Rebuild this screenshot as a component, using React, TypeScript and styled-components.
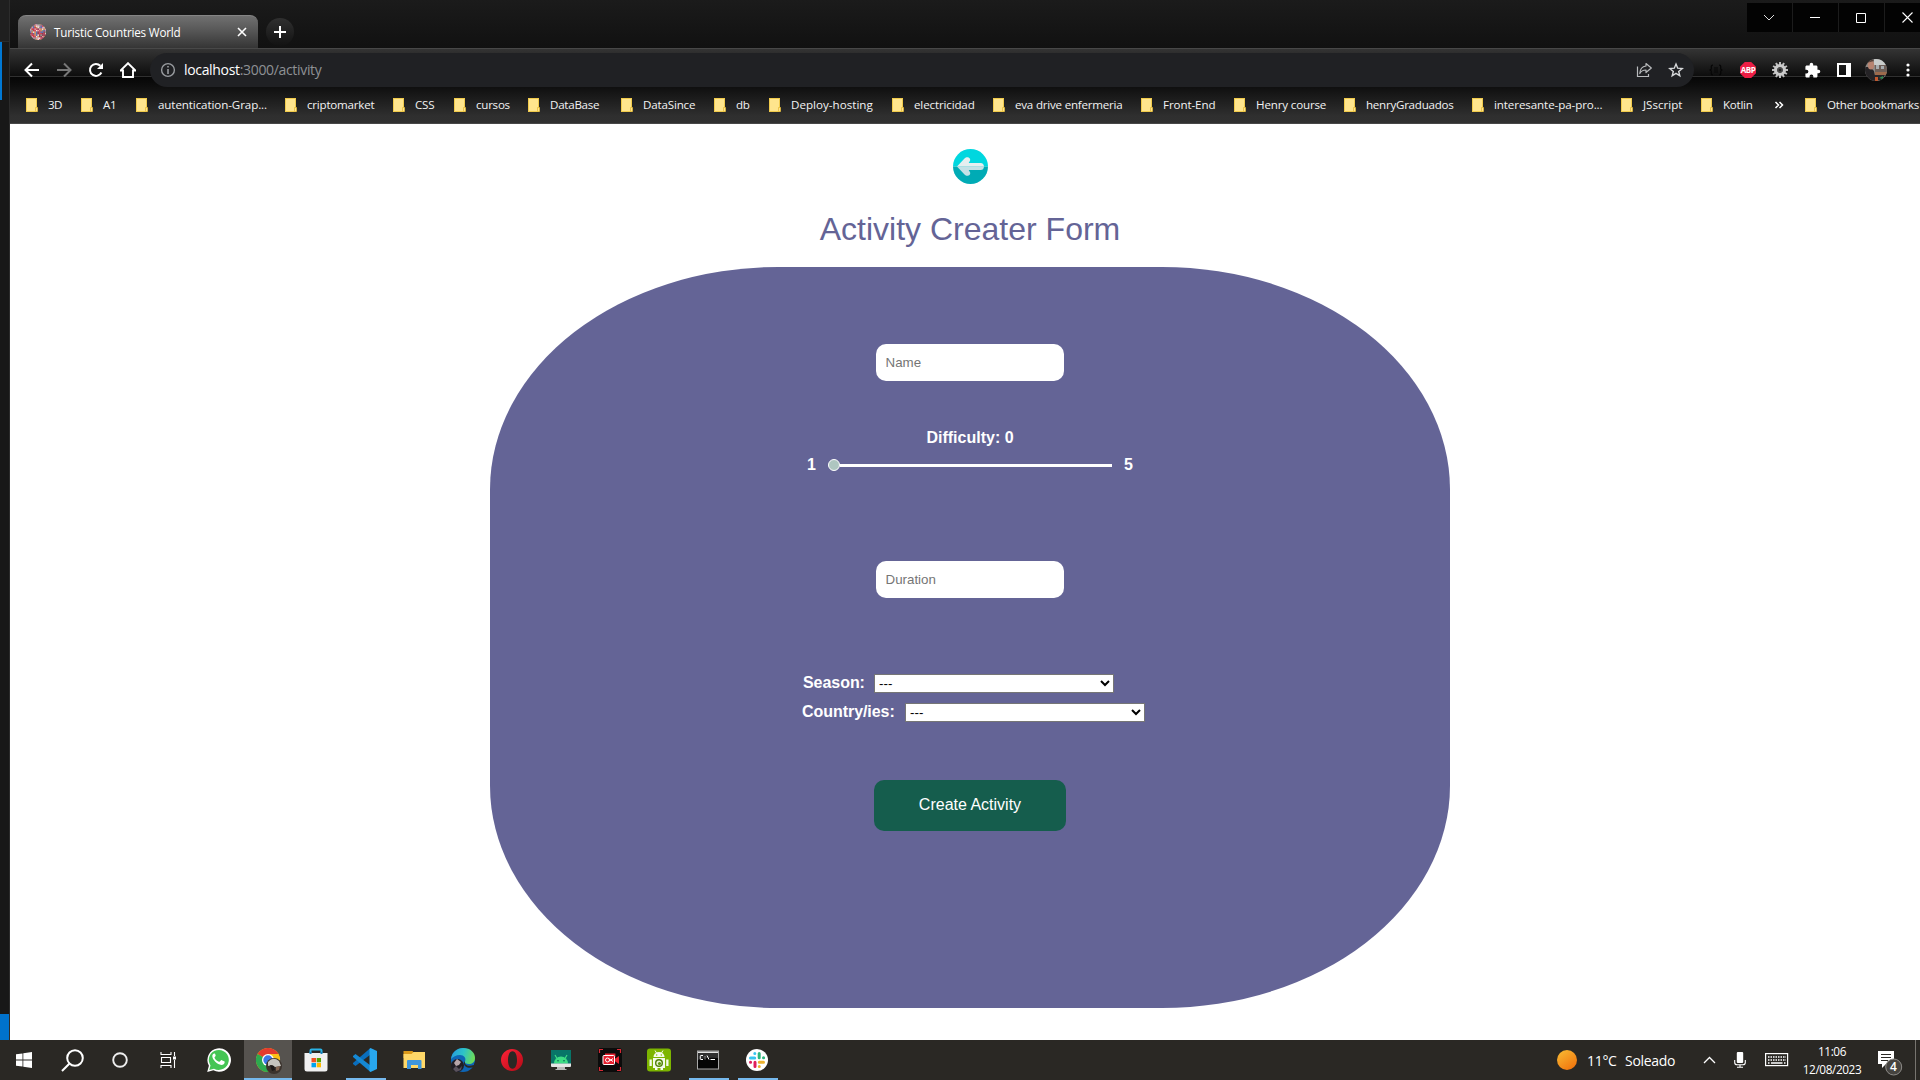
import React from "react";
import styled, { createGlobalStyle } from "styled-components";

const GlobalStyle = createGlobalStyle`
  * { box-sizing: border-box; }
  html, body { margin: 0; padding: 0; overflow: hidden; background: #fff; }
  button, input, select { font-family: "Liberation Sans", Arial, sans-serif; }
`;

const UI_FONT = `"Open Sans", "Noto Sans", sans-serif`;

const Desktop = styled.div`
  display: flex;
  flex-direction: column;
  width: 1920px;
  height: 1080px;
  overflow: hidden;
  font-family: ${UI_FONT};
`;
const Screen = styled.div`
  display: flex;
  height: 1040px;
`;
const EditorEdge = styled.div`
  display: flex;
  flex-direction: column;
  width: 10px;
  flex: none;
  background: #181818;
  border-right: 1px solid #2c2c2c;
`;
const EdgeTop = styled.div`
  height: 42px;
  background: #1f1f1f;
  border-bottom: 1px solid #2b2b2b;
`;
const EdgeMarker = styled.div`
  width: 2px;
  height: 58px;
  background: #0078d4;
`;
const EdgeStatus = styled.div`
  height: 26px;
  margin-top: auto;
  background: #0072cc;
`;
const Browser = styled.div`
  display: flex;
  flex-direction: column;
  flex: 1;
  min-width: 0;
  overflow: hidden;
`;

/* ---------- title bar ---------- */
const TitleBar = styled.div`
  display: flex;
  flex: none;
  height: 48px;
  padding-left: 8px;
  background: linear-gradient(#1b1b1b, #111);
`;
const Tab = styled.div`
  display: flex;
  align-items: center;
  width: 240px;
  height: 33px;
  margin-top: 15px;
  padding: 0 9px 0 12px;
  border-radius: 8px 8px 0 0;
  border-top: 1px solid #858585;
  background: linear-gradient(#707070, #5a5a5a 40%, #353535);
`;
const TabTitle = styled.span`
  flex: 1;
  margin: -1px 0 0 8px;
  font-size: 11.7px;
  letter-spacing: -0.19px;
  color: #fff;
  white-space: nowrap;
`;
const NewTab = styled.div`
  display: grid;
  place-items: center;
  width: 28px;
  height: 28px;
  margin: 18px 0 0 8px;
  border-radius: 50%;
  background: linear-gradient(#303030, #121212);
`;
const WindowControls = styled.div`
  display: flex;
  gap: 1px;
  height: 29px;
  margin: 3px -10px 0 auto;
  background: #1c1c1c;
`;
const ControlButton = styled.div`
  display: grid;
  place-items: center;
  width: 45px;
  padding-right: 1px;
  background: #030303;
`;

/* ---------- toolbar ---------- */
const Chrome = styled.div`
  display: flex;
  flex-direction: column;
  flex: none;
  height: 76px;
  border-bottom: 1px solid #474747;
  background: linear-gradient(#484848 0 1px, #343434 1px, #0d0d0d 28px, #303030 28px 29px, #060606 29px, #0d0d0d 37px, #2f2f2f 68px, #303030);
`;
const Toolbar = styled.div`
  display: flex;
  align-items: center;
  height: 39px;
  padding: 5px 0 0 6px;
`;
const ToolCell = styled.div`
  display: grid;
  place-items: center;
  width: 32px;
  height: 34px;
  flex: none;
`;
const Omnibox = styled.div`
  display: flex;
  align-items: center;
  width: 1544px;
  height: 34px;
  margin: 0 6px;
  padding: 0 2px 0 10px;
  flex: none;
  border-radius: 17px;
  background: #202124;
`;
const Url = styled.span`
  flex: 1;
  margin-left: 8px;
  font-size: 14px;
  letter-spacing: -0.33px;
  line-height: 20px;
  color: #8e9195;
`;
const Host = styled.span`
  color: #fff;
`;
const BookmarkBar = styled.div`
  display: flex;
  align-items: center;
  height: 36px;
  padding-left: 16px;
`;
const Bookmark = styled.div<{ $w: number }>`
  display: flex;
  align-items: center;
  width: ${(p) => p.$w}px;
  flex: none;
`;
const BookmarkLabel = styled.span<{ $tracking?: number }>`
  margin-left: 10px;
  font-size: 11.6px;
  letter-spacing: ${(p) => p.$tracking ?? -0.26}px;
  line-height: 16px;
  color: #f2f2f2;
  white-space: nowrap;
`;
const Overflow = styled.div`
  width: 20px;
  flex: none;
  line-height: 0;
`;
const BarDivider = styled.div`
  width: 1px;
  height: 16px;
  margin-right: 11px;
  background: #666;
`;

/* ---------- page ---------- */
const Page = styled.main`
  display: flex;
  flex-direction: column;
  align-items: center;
  flex: 1;
  padding: 25px 0 0 10px;
  background: #fff;
  font-family: "Liberation Sans", Arial, sans-serif;
`;
const BackLink = styled.div`
  width: 35px;
  height: 35px;
`;
const Heading = styled.h1`
  margin: 27px 0 19px;
  font-size: 32px;
  font-weight: 400;
  line-height: 37px;
  color: #646496;
`;
const Form = styled.form`
  display: flex;
  flex-direction: column;
  align-items: center;
  width: 960px;
  height: 741px;
  padding-top: 77px;
  border-radius: 30%;
  background: #646496;
  color: #fff;
`;
const TextInput = styled.input`
  width: 188px;
  height: 37px;
  padding: 0 10px 0 9.5px;
  border: 0;
  border-radius: 10px;
  background: #fff;
  font-size: 13.333px;
  &::placeholder { color: #757575; opacity: 1; }
`;
const Difficulty = styled.div`
  display: flex;
  flex-direction: column;
  align-items: center;
  height: 180px;
  padding-top: 48px;
  font-weight: 700;
  font-size: 16px;
  line-height: 18px;
`;
const SliderRow = styled.div`
  display: flex;
  align-items: center;
  gap: 12px;
  margin-top: 9px;
`;
const Slider = styled.div`
  display: flex;
  align-items: center;
  width: 284px;
  height: 12px;
`;
const Thumb = styled.div`
  width: 12px;
  height: 12px;
  border: 1px solid #fff;
  border-radius: 50%;
  background: #aec6c0;
`;
const Track = styled.div`
  flex: 1;
  height: 3px;
  margin-top: 1px;
  background: #fff;
`;
const Choices = styled.div`
  display: flex;
  flex-direction: column;
  gap: 10px;
  width: 344px;
  margin: 76px 0 58px 8px;
`;
const ChoiceRow = styled.label<{ $indent: number }>`
  display: flex;
  align-items: flex-start;
  height: 19px;
  padding-left: ${(p) => p.$indent}px;
  font-size: 16px;
  font-weight: 700;
  line-height: 18px;
  letter-spacing: -0.05px;
  white-space: nowrap;
`;
const LabelText = styled.span<{ $w: number }>`
  width: ${(p) => p.$w}px;
`;
const SelectSlot = styled.span`
  display: flex;
  flex: none;
`;
const Select = styled.select`
  width: 240px;
  height: 19px;
  padding: 0;
  border: 1px solid #767676;
  border-radius: 0;
  background-color: #fff;
  color: #000;
  font-size: 13.333px;
`;
const Submit = styled.button`
  width: 192px;
  height: 51px;
  padding: 0 0 1px;
  border: 0;
  border-radius: 10px;
  background: #155d4d;
  color: #fff;
  font-size: 16px;
`;

/* ---------- taskbar ---------- */
const Taskbar = styled.div`
  display: flex;
  height: 40px;
  background: #2a2824;
  color: #fff;
`;
const SystemCell = styled.div`
  display: grid;
  place-items: center;
  width: 48px;
`;
const Apps = styled.div`
  display: flex;
  margin-left: 3px;
`;
const AppCell = styled.div<{ $active?: boolean }>`
  display: flex;
  flex-direction: column;
  align-items: center;
  width: ${(p) => (p.$active ? 48 : 49)}px;
  padding-top: 8px;
  background: ${(p) => (p.$active ? "#56534f" : "transparent")};
`;
const RunBar = styled.div<{ $wide?: boolean }>`
  width: ${(p) => (p.$wide ? 48 : 40)}px;
  height: 2px;
  margin-top: 6px;
  background: #76b9ed;
`;
const IconBox = styled.div<{ $shift?: boolean }>`
  display: grid;
  place-items: center;
  width: 26px;
  height: 24px;
  margin-left: ${(p) => (p.$shift ? 2 : -1)}px;
`;
const Tray = styled.div`
  display: flex;
  align-items: center;
  margin-left: auto;
`;
const Weather = styled.div`
  display: flex;
  align-items: center;
  width: 145px;
  font-size: 14px;
  letter-spacing: -0.3px;
`;
const Sun = styled.div`
  width: 20px;
  height: 20px;
  margin-right: 10px;
  border-radius: 50%;
  background: linear-gradient(145deg, #f8bd35, #f06c08);
`;
const Temp = styled.span`
  width: 38px;
`;
const TrayIcon = styled.div<{ $w: number }>`
  display: grid;
  place-items: center;
  width: ${(p) => p.$w}px;
`;
const ClockSlot = styled.div`
  display: flex;
  justify-content: center;
  width: 86px;
  margin: -1px 3px 0 0;
`;
const Clock = styled.div`
  width: 70px;
  text-align: center;
  font-size: 11.8px;
  letter-spacing: -0.4px;
  line-height: 18px;
`;
const NoticeSlot = styled.div`
  position: relative;
  width: 37px;
  height: 26px;
  margin-top: 8px;
`;
const NoticeCount = styled.span`
  position: absolute;
  left: 12px;
  top: 7px;
  font-size: 12px;
  font-weight: 600;
  line-height: 17px;
`;
const Peek = styled.div`
  width: 5px;
  height: 40px;
  border-left: 1px solid #77746f;
`;

const Folder = () => (
  <svg width="12" height="14" viewBox="0 0 12 14">
    <rect x=".5" y=".5" width="10" height="13" fill="#ffe58d" stroke="#f1cb4c" />
    <path d="M9.500 9.500h2v4h-2z" fill="#ffe58d" stroke="#e9bd38" strokeWidth=".8" />
  </svg>
);

const bookmarks: [string, number, number?][] = [
  ["3D", 55, -0.6], ["A1", 55], ["autentication-Grap...", 149, -0.1], ["criptomarket", 108, -0.22], ["CSS", 61],
  ["cursos", 74], ["DataBase", 93], ["DataSince", 93, -0.18], ["db", 55], ["Deploy-hosting", 123, 0.02],
  ["electricidad", 101, -0.15], ["eva drive enfermeria", 148, -0.22], ["Front-End", 93, -0.1], ["Henry course", 110, -0.16],
  ["henryGraduados", 128], ["interesante-pa-pro...", 149, -0.1], ["JSscript", 80, 0], ["Kotlin", 73],
];

const confetti = ["#d9485f", "#f4e9e2", "#5470b5", "#d79a5a", "#c79ac5", "#e8a0ae", "#8c3c52", "#c83a4a", "#86a58c"];
const Favicon = () => (
  <svg width="16" height="16" viewBox="0 0 16 16">
    <clipPath id="globe"><circle cx="8" cy="8" r="8" /></clipPath>
    <g clipPath="url(#globe)">
      <rect width="16" height="16" fill="#b8707f" />
      {Array.from({ length: 121 }, (_, i) => {
        const noise = Math.abs(Math.sin(i * 127.1 + 3.7) * 43758.5453) % 1;
        return <rect key={i} x={(i % 11) * 1.5} y={Math.floor(i / 11) * 1.5} width="1.4" height="1.4" fill={confetti[Math.floor(noise * confetti.length)]} />;
      })}
    </g>
  </svg>
);

const Gear = () => (
  <svg width="16" height="16" viewBox="0 0 16 16">
    {Array.from({ length: 12 }, (_, i) => (
      <rect key={i} x="7" y="0" width="2" height="4" fill="#bdbdbd" transform={`rotate(${i * 30} 8 8)`} />
    ))}
    <circle cx="8" cy="8" r="4.400" fill="none" stroke="#cacaca" strokeWidth="3.400" />
    <circle cx="8" cy="8" r="2.700" fill="#4b4b4b" />
    <circle cx="8" cy="8" r="1.300" fill="#222" />
  </svg>
);

const Avatar = () => (
  <svg width="22" height="22" viewBox="0 0 22 22">
    <clipPath id="face"><circle cx="11" cy="11" r="11" /></clipPath>
    <g clipPath="url(#face)">
      <rect width="22" height="22" fill="#8b8884" />
      <path d="M9 0h13v6H9z" fill="#c9cccb" />
      <path d="M10 6h12v7H10z" fill="#6d5e57" />
      <path d="M11 6h3v4h-3zm5 1h3v3h-3z" fill="#a8adb0" />
      <path d="M10 13h12v3H10z" fill="#9c6a4c" />
      <path d="M0 22V8l5 0 4 4 2 10z" fill="#252326" />
      <ellipse cx="6" cy="6" rx="3.200" ry="4.600" fill="#b78370" />
      <path d="M2 4C3-1 8 0 9 2L5 3z" fill="#574139" />
      <path d="M8 16h12l-3 5H9z" fill="#282427" />
      <path d="M14 19l4-2v3z" fill="#2f8c55" />
      <path d="M10 18h3v4h-3z" fill="#c4572c" />
    </g>
  </svg>
);

const WhatsApp = () => (
  <svg width="24" height="24" viewBox="0 0 24 24">
    <path d="M.2 24l1.700-6.200A11.800 11.800 0 1 1 6.400 22.300z" fill="#fff" />
    <path d="M2.200 22l1.300-4.500A10 10 0 1 1 7 20.700z" fill="#45c554" />
    <path d="M8.200 6.100c-.3-.6-.6-.6-1-.6-.8 0-1.900.9-1.900 2.600 0 3.600 5 8.700 9.100 8.900 1.700 0 3.300-1 3.300-2.900 0-.4-.1-.6-.6-.8l-2.400-1.100c-.4-.2-.7-.1-.9.200l-1 1.200c-.3.3-.5.3-.9.100-2-.8-3.400-2.200-4.300-3.800-.2-.3 0-.6.200-.8l.8-1c.2-.3.1-.5 0-.8z" fill="#fff" />
  </svg>
);

const ChromeLogo = () => (
  <svg width="26" height="26" viewBox="0 0 26 26">
    <circle cx="12" cy="12" r="12" fill="#fbc116" />
    <path d="M12 12L1.600 6A12 12 0 0 1 22.400 6z" fill="#e33b2e" />
    <path d="M12 12L1.600 6A12 12 0 0 0 12 24l5.200-9z" fill="#2da94f" />
    <path d="M12 6h10.400A12 12 0 0 1 12 24l5.200-9z" fill="#fbc116" />
    <circle cx="12" cy="12" r="6" fill="#fff" />
    <circle cx="12" cy="12" r="4.700" fill="#3b78e7" />
    <circle cx="18" cy="18" r="8" fill="#3b332d" />
    <path d="M12 14q5-6 11-1l2 5-6 1-3-2-4 1z" fill="#c6c3bd" />
    <path d="M14 17l4 1 1 4-3 1z" fill="#1d1817" />
    <path d="M20 19l4-1-1 4-3 1z" fill="#846450" />
  </svg>
);

const Store = () => (
  <svg width="24" height="24" viewBox="0 0 24 24">
    <path d="M6.500 6V2.500Q6.500 1.500 7.500 1.500h9q1 0 1 1V6" fill="none" stroke="#2ab3e6" strokeWidth="2" />
    <path d="M.5 5h23v16q0 2.500-2.500 2.500H3Q.5 23.500.5 21z" fill="#f0f0f0" />
    <path d="M5.500 4h2v2h-2zm11 0h2v2h-2z" fill="#1682bd" />
    <path d="M7.500 10H12v4.300H7.500z" fill="#f25022" /><path d="M12.700 10H17v4.300h-4.300z" fill="#57a300" />
    <path d="M7.500 15H12v4.300H7.500z" fill="#00a4ef" /><path d="M12.700 15H17v4.300h-4.300z" fill="#ffb900" />
  </svg>
);

const VSCode = () => (
  <svg width="24" height="24" viewBox="0 0 24 24">
    <path d="M17.500 6.500L2.500 18 0 16v-1L17.500 0z" fill="#0a6ebd" />
    <path d="M17.500 17.500L2.500 6 0 8v1L17.500 24z" fill="#1588d3" />
    <path d="M17.500 0L24 3v18l-6.500 3-1-1V1z" fill="#28a8f0" />
  </svg>
);

const Explorer = () => (
  <svg width="24" height="24" viewBox="0 0 24 24">
    <path d="M1.500 3h9l1.500 2H22.500v5h-21z" fill="#dc9a1a" />
    <path d="M1.500 6h8l2-2h11.500v16h-21.500z" fill="#ffd868" />
    <path d="M5 21v-8q0-1 1-1h12.500q1 0 1 1v8H16v-4H9v4z" fill="#3f96dc" />
  </svg>
);

const Edge = () => (
  <svg width="24" height="24" viewBox="0 0 24 24">
    <defs>
      <linearGradient id="edgeTop" x1="0" x2="1" y1=".3" y2=".5"><stop stopColor="#269bdd" /><stop offset=".5" stopColor="#2dc3c8" /><stop offset="1" stopColor="#6fdc55" /></linearGradient>
    </defs>
    <circle cx="12" cy="12" r="12" fill="#0e65b5" />
    <path d="M0 11C1 4 6 0 12 0c8 0 12 5 12 10 0 4-3 6-6 6-3 0-4.500-1-4-2.500C15.500 10 13 7 9 7c-4 0-7 2-9 4z" fill="url(#edgeTop)" />
    <path d="M14 13.500C13 17 17 19 23 17l1-3v5l-1 0c-5 2-11 0-10-5z" fill="#2a2824" />
    <circle cx="6.500" cy="17.500" r="6.500" fill="#211d24" />
    <path d="M6 11l4 3-2 3-3 1-2-3z" fill="#b7a5a9" />
    <path d="M2 21l3-3 3 3 3-3-1 4-5 2z" fill="#59515c" />
  </svg>
);

const Opera = () => (
  <svg width="24" height="24" viewBox="0 0 24 24">
    <defs><linearGradient id="operaRed" x1="0" y1="0" x2="1" y2="1"><stop stopColor="#ff2338" /><stop offset="1" stopColor="#b20a16" /></linearGradient></defs>
    <path fillRule="evenodd" d="M12 1a11 11 0 1 1 0 22 11 11 0 0 1 0-22zM12.500 3.200C9.300 3.200 8 7.500 8 12s1.300 8.800 4.500 8.800S17 16.500 17 12s-1.300-8.800-4.500-8.800z" fill="url(#operaRed)" />
  </svg>
);

const Emulator = () => (
  <svg width="24" height="24" viewBox="0 0 24 24">
    <path d="M2 2h20v16H2z" fill="#087568" />
    <path d="M5 15.500a7 7 0 0 1 14 0z" fill="#3ddc84" />
    <path d="M6 7l2 3.500M18 7l-2 3.500" stroke="#3ddc84" strokeWidth="1.200" />
    <circle cx="9" cy="12.700" r=".8" fill="#075e53" /><circle cx="15" cy="12.700" r=".8" fill="#075e53" />
    <path d="M2 15.500h20V18q0 1-1 1H3q-1 0-1-1z" fill="#e5e5e5" />
    <path d="M8 19h8v2h1.500v1h-11v-1H8z" fill="#b8b8b8" />
  </svg>
);

const Recorder = () => (
  <svg width="24" height="24" viewBox="0 0 24 24">
    <rect width="24" height="24" rx="3" fill="#0b0b0b" />
    <path d="M1.500 5V1.500H5M19 1.500h3.500V5M22.500 19v3.500H19M5 22.500H1.500V19" fill="none" stroke="#d42a35" strokeWidth="1.200" />
    <path d="M7 6.500h9.500v2.500" fill="none" stroke="#e5202f" strokeWidth="1.800" />
    <path d="M16.500 11l4.500-3v8l-4.500-3z" fill="#e5202f" />
    <rect x="5" y="7.500" width="11.500" height="9" rx="1" fill="#e5202f" stroke="#fff" strokeWidth="1" />
    <circle cx="9.500" cy="12" r="2" fill="none" stroke="#fff" /><path d="M11.300 11l3.700 2.500M11.300 13L15 10.500" stroke="#fff" />
  </svg>
);

const Robot = () => (
  <svg width="24" height="24" viewBox="0 0 24 24">
    <rect y=".5" width="24" height="23" rx="3" fill="#7db500" />
    <path d="M6.500 9a5.500 5 0 0 1 11 0z" fill="#f4faeb" />
    <path d="M8 2.500l1.500 2.500M16 2.500L14.500 5" stroke="#f4faeb" strokeWidth="1" />
    <circle cx="9.700" cy="7" r=".7" fill="#7db500" /><circle cx="14.300" cy="7" r=".7" fill="#7db500" />
    <path d="M6 10h12v10H6zM2.500 11.500h2.300V18H2.500zm16.700 0h2.300V18h-2.300zM8 19h2.500v3H8zm5.500 0H16v3h-2.500z" fill="#f4faeb" />
    <circle cx="12" cy="15" r="4" fill="#4f7f08" /><circle cx="12" cy="15" r="2.600" fill="#e8f5d5" /><circle cx="12.500" cy="15.500" r="1.600" fill="#5e960b" />
  </svg>
);

const Terminal = () => (
  <svg width="24" height="24" viewBox="0 0 24 24">
    <rect x="1.500" y="3" width="21" height="18" fill="#050505" stroke="#a9a9a9" />
    <path d="M2 3.500h20v1.500H2z" fill="#e4e4e4" />
    <path d="M2 12Q10 9 22 10V5H2z" fill="#303030" />
    <path d="M7 7.500H5q-.7 0-.7.700v2.600q0 .700.700.700h2M9 8.500v.8M9 10.500v.8M11 7.500l2 4M14.500 11.500h4.500" fill="none" stroke="#fff" strokeWidth="1" />
  </svg>
);

const Slack = () => (
  <svg width="24" height="24" viewBox="0 0 24 24">
    <circle cx="12" cy="12" r="11" fill="#fff" />
    <g fill="none" strokeWidth="3" strokeLinecap="round">
      <path d="M9.800 5.500v.1M5.500 10h4.200" stroke="#36c5f0" /><path d="M14.200 5.500v4.300M18.500 9.800h.1" stroke="#2eb67d" />
      <path d="M14.300 14.200h4.200M14.300 18.500v.1" stroke="#ecb22e" /><path d="M10 14.200v4.300M5.500 14.200h.1" stroke="#e01e5a" />
    </g>
  </svg>
);

const apps: { icon: React.ReactElement; active?: boolean; running?: boolean }[] = [
  { icon: <WhatsApp /> }, { icon: <ChromeLogo />, active: true, running: true }, { icon: <Store /> },
  { icon: <VSCode />, running: true }, { icon: <Explorer /> }, { icon: <Edge /> }, { icon: <Opera /> },
  { icon: <Emulator /> }, { icon: <Recorder /> }, { icon: <Robot /> }, { icon: <Terminal />, running: true },
  { icon: <Slack />, running: true },
];

const AbpSign = styled.div`
  display: grid;
  place-items: center;
  width: 16px;
  height: 16px;
  background: #ed1e45;
  clip-path: polygon(30% 0, 70% 0, 100% 30%, 100% 70%, 70% 100%, 30% 100%, 0 70%, 0 30%);
  color: #fff;
  font: 700 8px/16px "Open Sans", sans-serif;
  letter-spacing: -0.4px;
`;

const BrowserHeader = () => (
  <>
    <TitleBar>
      <Tab>
        <Favicon />
        <TabTitle>Turistic Countries World</TabTitle>
        <svg width="14" height="14" viewBox="0 0 14 14"><path d="M3 3l8 8M11 3l-8 8" stroke="#fff" strokeWidth="1.600" /></svg>
      </Tab>
      <NewTab><svg width="12" height="12" viewBox="0 0 12 12"><path d="M6 0v12M0 6h12" stroke="#fff" strokeWidth="2" /></svg></NewTab>
      <WindowControls>
        <ControlButton><svg width="12" height="8" viewBox="0 0 12 8"><path d="M1 1l5 5 5-5" fill="none" stroke="#ddd" /></svg></ControlButton>
        <ControlButton><svg width="10" height="2" viewBox="0 0 10 2"><path d="M0 .5h10" stroke="#fff" /></svg></ControlButton>
        <ControlButton><svg width="10" height="10" viewBox="0 0 10 10"><path d="M.5.5h9v9h-9z" fill="none" stroke="#fff" /></svg></ControlButton>
        <ControlButton><svg width="11" height="11" viewBox="0 0 11 11"><path d="M.5.5l10 10M10.500.5l-10 10" stroke="#fff" strokeWidth="1.100" /></svg></ControlButton>
      </WindowControls>
    </TitleBar>
    <Chrome>
      <Toolbar>
        <ToolCell><svg width="16" height="16" viewBox="0 0 16 16"><path d="M15 8H2M8 1.500L1.500 8 8 14.500" fill="none" stroke="#fff" strokeWidth="2" /></svg></ToolCell>
        <ToolCell><svg width="16" height="16" viewBox="0 0 16 16"><path d="M1 8h13M8 1.500L14.500 8 8 14.500" fill="none" stroke="#777" strokeWidth="2" /></svg></ToolCell>
        <ToolCell><svg width="16" height="16" viewBox="0 0 16 16"><path d="M13.400 10.500A6 6 0 1 1 12.300 3.700" fill="none" stroke="#fff" strokeWidth="2" /><path d="M15 1v6H9z" fill="#fff" /></svg></ToolCell>
        <ToolCell><svg width="16" height="16" viewBox="0 0 16 16"><path d="M.5 8.500H3V15h10V8.500h2.500L8 1.200z" fill="none" stroke="#fff" strokeWidth="1.900" /></svg></ToolCell>
        <Omnibox>
          <svg width="16" height="16" viewBox="0 0 16 16"><circle cx="8" cy="8" r="6.400" fill="none" stroke="#9a9da1" strokeWidth="1.400" /><path d="M8 4v1.600M8 7v5" stroke="#9a9da1" strokeWidth="1.600" /></svg>
          <Url><Host>localhost</Host>:3000/activity</Url>
          <ToolCell><svg width="16" height="16" viewBox="0 0 16 16"><path d="M1.500 4.500v10h11v-2.500" fill="none" stroke="#b9bbbd" strokeWidth="1.200" /><path d="M10 1.500L15.300 6 10 10.500V8C7 8 5 9 3.800 11.500 4 7 6.500 4.500 10 4z" fill="none" stroke="#b9bbbd" strokeWidth="1.200" strokeLinejoin="round" /></svg></ToolCell>
          <ToolCell><svg width="16" height="16" viewBox="0 0 16 16"><path d="M8 2l1.700 4.200 4.500.3-3.500 2.900 1.100 4.400L8 11.400l-3.800 2.400 1.100-4.400L1.800 6.500l4.500-.3z" fill="none" stroke="#d7d9db" strokeWidth="1.400" /></svg></ToolCell>
        </Omnibox>
        <ToolCell><svg width="14" height="12" viewBox="0 0 14 12"><path d="M4 1Q2 1 2.300 3.500T.5 6Q2.600 6 2.300 8.500T4 11M10 1q2 0 1.700 2.500T13.500 6q-2.100 0-1.800 2.500T10 11M5 4h4M5 6h4M5 8h4" fill="none" stroke="#060606" strokeWidth="1.200" /></svg></ToolCell>
        <ToolCell><AbpSign>ABP</AbpSign></ToolCell>
        <ToolCell><Gear /></ToolCell>
        <ToolCell><svg width="17" height="17" viewBox="0 0 24 24"><path d="M20.500 11H19V7c0-1.100-.9-2-2-2h-4V3.500a2.500 2.500 0 0 0-5 0V5H4c-1.100 0-2 .9-2 2v3.800h1.500a2.700 2.700 0 0 1 0 5.400H2V20c0 1.100.9 2 2 2h3.800v-1.500a2.700 2.700 0 0 1 5.400 0V22H17c1.100 0 2-.9 2-2v-4h1.500a2.500 2.500 0 0 0 0-5z" fill="#fff" /></svg></ToolCell>
        <ToolCell><svg width="14" height="14" viewBox="0 0 14 14"><path d="M1 1h12v12H1z" fill="none" stroke="#fff" strokeWidth="2" /><path d="M9 1h4v12H9z" fill="#fff" /></svg></ToolCell>
        <ToolCell><Avatar /></ToolCell>
        <ToolCell><svg width="4" height="14" viewBox="0 0 4 14"><g fill="#fff"><circle cx="2" cy="2" r="1.600" /><circle cx="2" cy="7" r="1.600" /><circle cx="2" cy="12" r="1.600" /></g></svg></ToolCell>
      </Toolbar>
      <BookmarkBar>
        {bookmarks.map(([label, w, tracking]) => (
          <Bookmark key={label} $w={w}><Folder /><BookmarkLabel $tracking={tracking}>{label}</BookmarkLabel></Bookmark>
        ))}
        <Overflow><svg width="10" height="8" viewBox="0 0 10 8"><path d="M1.500 1l3 3-3 3M5.500 1l3 3-3 3" fill="none" stroke="#fff" strokeWidth="1.500" /></svg></Overflow>
        <BarDivider />
        <Bookmark $w={130}><Folder /><BookmarkLabel $tracking={-0.2}>Other bookmarks</BookmarkLabel></Bookmark>
      </BookmarkBar>
    </Chrome>
  </>
);

const ActivityPage = () => (
  <Page>
    <BackLink>
      <svg width="35" height="35" viewBox="0 0 35 35">
        <path d="M0 17.500a17.500 17.500 0 0 1 35 0z" fill="#00d7df" />
        <path d="M0 17.500a17.500 17.500 0 0 0 35 0z" fill="#00abb5" />
        <path d="M4 17.500L11.500 9.500c2.500-3 6.800-.5 5.500 2.200L15.700 14h12q3 0 3.300 3.500z" fill="#e5eff0" />
        <path d="M4 17.500L11.500 25.500c2.500 3 6.800.5 5.500-2.200L15.700 21h12q3 0 3.300-3.500z" fill="#c4e1e6" />
      </svg>
    </BackLink>
    <Heading>Activity Creater Form</Heading>
    <Form>
      <TextInput placeholder="Name" />
      <Difficulty>
        Difficulty: 0
        <SliderRow>
          <span>1</span>
          <Slider><Thumb /><Track /></Slider>
          <span>5</span>
        </SliderRow>
      </Difficulty>
      <TextInput placeholder="Duration" />
      <Choices>
        <ChoiceRow $indent={1}><LabelText $w={71}>Season:</LabelText><SelectSlot><Select><option>---</option></Select></SelectSlot></ChoiceRow>
        <ChoiceRow $indent={0}><LabelText $w={103}>Country/ies:</LabelText><SelectSlot><Select><option>---</option></Select></SelectSlot></ChoiceRow>
      </Choices>
      <Submit type="button">Create Activity</Submit>
    </Form>
  </Page>
);

const WindowsTaskbar = () => (
  <Taskbar>
    <SystemCell><svg width="16" height="16" viewBox="0 0 16 16"><path d="M0 2.300l6.500-.9v6.200H0zM7.300 1.300L16 0v7.600H7.300zM0 8.400h6.500v6.200L0 13.700zM7.300 8.400H16V16l-8.700-1.200z" fill="#fff" /></svg></SystemCell>
    <SystemCell><svg width="23" height="23" viewBox="0 0 23 23"><circle cx="14" cy="9" r="7.800" fill="none" stroke="#fff" strokeWidth="2" /><path d="M8.300 14.700L1 22" stroke="#fff" strokeWidth="2" /></svg></SystemCell>
    <SystemCell><svg width="16" height="16" viewBox="0 0 16 16"><circle cx="8" cy="8" r="6.800" fill="none" stroke="#eee" strokeWidth="1.900" /></svg></SystemCell>
    <SystemCell><svg width="17" height="16" viewBox="0 0 17 16"><path d="M1 0v2.500h10V0M1 16v-2.500h10V16M1.500 5.500h9v5h-9zM14.500 0v4M14.500 8v8" fill="none" stroke="#fff" strokeWidth="1.100" /><path d="M13 4.500h3v3h-3z" fill="#fff" /></svg></SystemCell>
    <Apps>
      {apps.map((a, i) => (
        <AppCell key={i} $active={a.active}>
          <IconBox $shift={a.active}>{a.icon}</IconBox>
          {a.running && <RunBar $wide={a.active} />}
        </AppCell>
      ))}
    </Apps>
    <Tray>
      <Weather><Sun /><Temp>11°C</Temp>Soleado</Weather>
      <TrayIcon $w={14}><svg width="13" height="8" viewBox="0 0 13 8"><path d="M1 7l5.500-5.500L12 7" fill="none" stroke="#fff" strokeWidth="1.300" /></svg></TrayIcon>
      <TrayIcon $w={48}><svg width="12" height="16" viewBox="0 0 12 16"><rect x="2.800" y="0" width="6.400" height="11" rx="1" fill="#fff" /><path d="M.7 8v2.500q0 2.300 2.500 2.300h5.600q2.500 0 2.500-2.300V8M6 12.800V15M3 15.300h6" fill="none" stroke="#fff" strokeWidth="1.100" /></svg></TrayIcon>
      <TrayIcon $w={25}><svg width="24" height="14" viewBox="0 0 24 14"><rect x=".6" y=".6" width="22" height="12" fill="none" stroke="#fff" strokeWidth="1.200" /><path d="M3 4h18M3 7h18" stroke="#fff" strokeWidth="1.300" strokeDasharray="1.500 1" /><path d="M3 10h1.500M6 10h11.500M19 10h1.500" stroke="#fff" strokeWidth="1.300" /></svg></TrayIcon>
      <ClockSlot><Clock>11:06<br />12/08/2023</Clock></ClockSlot>
      <NoticeSlot>
        <svg width="25" height="26" viewBox="0 0 25 26"><path d="M0 0h16v13H8l-4 4v-4H0z" fill="#fff" /><path d="M3 3.500h10M3 6.500h10M3 9.500h7" stroke="#2a2824" /><circle cx="15.700" cy="16" r="8" fill="#45433f" stroke="#8d8b88" /></svg>
        <NoticeCount>4</NoticeCount>
      </NoticeSlot>
      <Peek />
    </Tray>
  </Taskbar>
);

export default function App() {
  return (
    <>
      <GlobalStyle />
      <Desktop>
        <Screen>
          <EditorEdge><EdgeTop /><EdgeMarker /><EdgeStatus /></EditorEdge>
          <Browser>
            <BrowserHeader />
            <ActivityPage />
          </Browser>
        </Screen>
        <WindowsTaskbar />
      </Desktop>
    </>
  );
}
